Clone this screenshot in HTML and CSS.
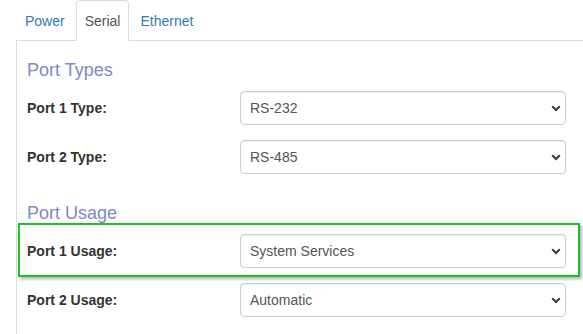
FILE: index.html
```html
<!DOCTYPE html>
<html>
<head>
<meta charset="utf-8">
<link rel="stylesheet" href="styles.css">
</head>
<body>
<div class="page">
  <ul class="tabs">
    <li class="tab"><a href="#">Power</a></li>
    <li class="tab active"><a href="#">Serial</a></li>
    <li class="tab"><a href="#">Ethernet</a></li>
  </ul>
  <div class="pane">
    <section class="section">
      <h4 class="section-title">Port Types</h4>
      <div class="form-group">
        <label class="label">Port 1 Type:</label>
        <div class="select-wrap">
          <select class="select"><option>RS-232</option></select>
          <svg class="chevron" width="10" height="7" viewBox="0 0 10 7"><path d="M1.2 1.2 L5 5 L8.8 1.2" fill="none" stroke="#3a3a3a" stroke-width="2"/></svg>
        </div>
      </div>
      <div class="form-group">
        <label class="label">Port 2 Type:</label>
        <div class="select-wrap">
          <select class="select"><option>RS-485</option></select>
          <svg class="chevron" width="10" height="7" viewBox="0 0 10 7"><path d="M1.2 1.2 L5 5 L8.8 1.2" fill="none" stroke="#3a3a3a" stroke-width="2"/></svg>
        </div>
      </div>
    </section>
    <section class="section">
      <h4 class="section-title">Port Usage</h4>
      <div class="form-group highlight">
        <label class="label">Port 1 Usage:</label>
        <div class="select-wrap">
          <select class="select"><option>System Services</option></select>
          <svg class="chevron" width="10" height="7" viewBox="0 0 10 7"><path d="M1.2 1.2 L5 5 L8.8 1.2" fill="none" stroke="#3a3a3a" stroke-width="2"/></svg>
        </div>
      </div>
      <div class="form-group">
        <label class="label">Port 2 Usage:</label>
        <div class="select-wrap">
          <select class="select"><option>Automatic</option></select>
          <svg class="chevron" width="10" height="7" viewBox="0 0 10 7"><path d="M1.2 1.2 L5 5 L8.8 1.2" fill="none" stroke="#3a3a3a" stroke-width="2"/></svg>
        </div>
      </div>
    </section>
  </div>
</div>
</body>
</html>
```
FILE: styles.css
```css
html, body {
  margin: 0;
  padding: 0;
  background: #fff;
  font-family: "Liberation Sans", Arial, sans-serif;
  font-size: 14px;
  line-height: 20px;
  color: #333;
  overflow: hidden;
}

.page {
  padding-left: 16px;
  height: 334px;
  display: flex;
  flex-direction: column;
}

.tabs {
  display: flex;
  margin: 0;
  padding: 0;
  list-style: none;
  border-bottom: 1px solid #ddd;
}

.tab {
  margin-right: 2px;
  margin-bottom: -1px;
}

.tab a {
  display: block;
  padding: 10px 8px 9px;
  border: 1px solid transparent;
  border-radius: 4px 4px 0 0;
  color: #337ab7;
  text-decoration: none;
  line-height: 20px;
}

.tab.active a {
  color: #555;
  background: #fff;
  border-color: #ddd #ddd transparent;
}

.pane {
  flex: 1;
  border-left: 1px solid #ddd;
  padding: 20px 10px 0;
}

.section {
  padding-bottom: 15px;
}

.section-title {
  margin: 0 0 10px;
  font-size: 18px;
  line-height: 19.8px;
  font-weight: normal;
  color: #7f87c6;
}

.form-group {
  display: grid;
  grid-template-columns: 213px 326px;
  align-items: center;
  margin-bottom: 15px;
}

.label {
  font-weight: bold;
  color: #333;
}

.highlight {
  position: relative;
}

.highlight::after {
  content: "";
  position: absolute;
  top: -11px;
  bottom: -9px;
  left: -9px;
  right: -7px;
  border: 2px solid #1ec21e;
  box-shadow: 2px 2px 3px rgba(0, 0, 0, 0.3);
  pointer-events: none;
}

.select-wrap {
  position: relative;
}

.select {
  display: block;
  width: 100%;
  height: 34px;
  padding: 6px 12px 6px 9px;
  margin: 0;
  appearance: none;
  -webkit-appearance: none;
  background: #fff;
  border: 1px solid #ccc;
  border-radius: 4px;
  box-shadow: inset 0 1px 1px rgba(0, 0, 0, 0.075);
  font-family: "Liberation Sans", Arial, sans-serif;
  font-size: 14px;
  line-height: 20px;
  color: #555;
}

.chevron {
  position: absolute;
  right: 5px;
  top: 14px;
}
```
